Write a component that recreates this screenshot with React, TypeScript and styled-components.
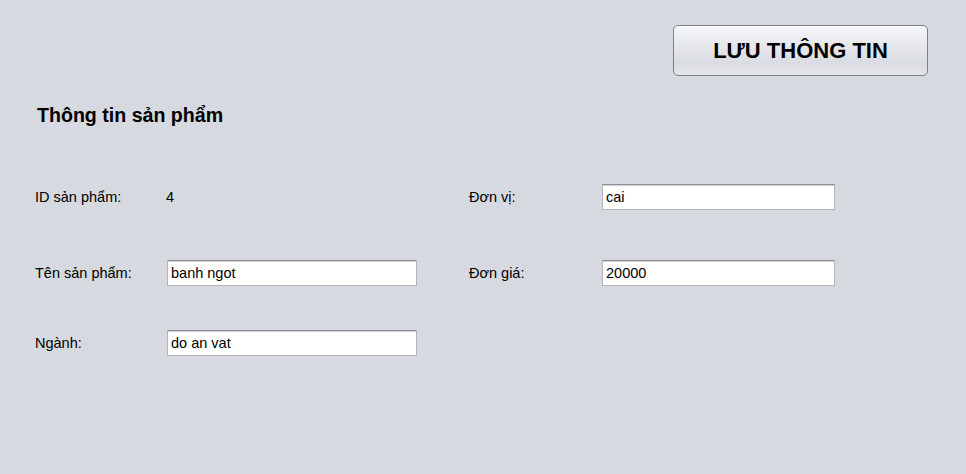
import React from "react";
import styled, { createGlobalStyle } from "styled-components";

const GlobalStyle = createGlobalStyle`
  html, body {
    margin: 0;
    padding: 0;
    background: #d6d9df;
  }
  body {
    font-family: "Liberation Sans", Arial, sans-serif;
    color: #000;
  }
`;

const Page = styled.div`
  width: 966px;
  height: 474px;
  box-sizing: border-box;
  padding: 25px 38px 0 35px;
  display: flex;
  flex-direction: column;
  background: #d6d9df;
`;

const Header = styled.div`
  display: flex;
  justify-content: flex-end;
`;

const SaveButton = styled.button`
  width: 255px;
  height: 51px;
  box-sizing: border-box;
  border: 1px solid #7c7f85;
  border-radius: 5px;
  background: linear-gradient(#f5f6f8 0%, #e4e6ea 45%, #d9dce2 75%, #e3e5e9 100%);
  box-shadow: inset 0 1px 0 #ffffff;
  font-family: "Liberation Sans", Arial, sans-serif;
  font-weight: bold;
  font-size: 22px;
  color: #000;
  padding: 0;
  cursor: pointer;
`;

const Title = styled.h2`
  margin: 27px 0 0 2px;
  font-size: 19.6px;
  line-height: 24px;
  font-weight: bold;
`;

const Form = styled.div`
  margin-top: 57px;
  display: flex;
  flex-direction: column;
`;

const Row = styled.div<{ $top: number }>`
  display: grid;
  grid-template-columns: 132px 250px 52px 133px 233px;
  height: 26px;
  align-items: center;
  margin-top: ${(p) => p.$top}px;
`;

const Label = styled.span`
  font-size: 14.5px;
  line-height: 18px;
`;

const Value = styled.span`
  font-size: 14.5px;
  line-height: 18px;
  margin-left: -1px;
`;

const Input = styled.input`
  width: 100%;
  height: 26px;
  box-sizing: border-box;
  border: 1px solid #b3b5b9;
  border-top-color: #8e9095;
  box-shadow: inset 0 1px 0 #d2d3d6;
  background: #fff;
  padding: 0 3px;
  font-family: "Liberation Sans", Arial, sans-serif;
  font-size: 14.5px;
  color: #000;
  outline: none;
`;

const Spacer = styled.div``;

export default function App() {
  return (
    <>
      <GlobalStyle />
      <Page>
        <Header>
          <SaveButton>LƯU THÔNG TIN</SaveButton>
        </Header>
        <Title>Thông tin sản phẩm</Title>
        <Form>
          <Row $top={0}>
            <Label>ID sản phẩm:</Label>
            <Value>4</Value>
            <Spacer />
            <Label>Đơn vị:</Label>
            <Input defaultValue="cai" />
          </Row>
          <Row $top={50}>
            <Label>Tên sản phẩm:</Label>
            <Input defaultValue="banh ngot" />
            <Spacer />
            <Label>Đơn giá:</Label>
            <Input defaultValue="20000" />
          </Row>
          <Row $top={44}>
            <Label>Ngành:</Label>
            <Input defaultValue="do an vat" />
          </Row>
        </Form>
      </Page>
    </>
  );
}
